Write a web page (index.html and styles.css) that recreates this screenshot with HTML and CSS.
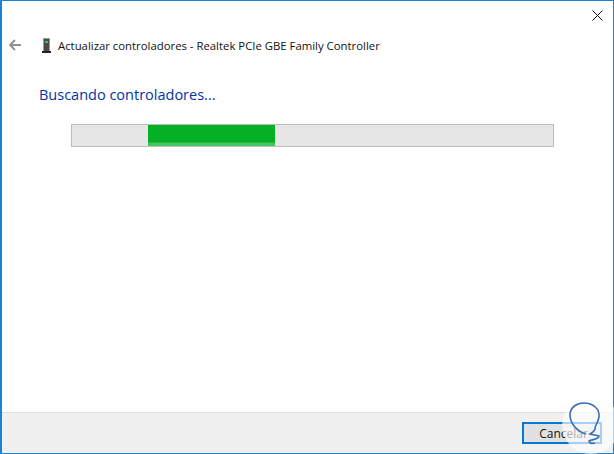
FILE: index.html
```html
<!DOCTYPE html>
<html lang="es">
<head>
    <meta charset="UTF-8">
    <title>Actualizar controladores</title>
    <link rel="stylesheet" href="styles.css">
</head>
<body>
    <div class="window">
        <div class="title-bar">
            <svg class="close-icon" width="11" height="11" viewBox="0 0 11 11">
                <path d="M0.5 0.5L10.5 10.5M10.5 0.5L0.5 10.5" stroke="#111" stroke-width="1" fill="none"/>
            </svg>
        </div>
        <div class="nav-row">
            <svg class="back-icon" width="12" height="12" viewBox="0 0 12 12">
                <path d="M6 1L1 6L6 11M1 6H12" stroke="#909090" stroke-width="1.8" fill="none"/>
            </svg>
            <svg class="device-icon" width="9" height="15" viewBox="0 0 9 15">
                <rect x="1" y="0" width="7" height="13" fill="#9a9a9a"/>
                <rect x="2" y="1" width="5" height="12" fill="#4a4a4a"/>
                <rect x="3" y="3" width="3" height="2" fill="#19e03c"/>
                <rect x="0" y="13" width="9" height="2" fill="#222"/>
            </svg>
            <span class="nav-title">Actualizar controladores - Realtek PCIe GBE Family Controller</span>
        </div>
        <div class="content">
            <h1 class="heading">Buscando controladores...</h1>
            <div class="progress">
                <div class="progress-fill"></div>
            </div>
        </div>
        <div class="footer">
            <button class="cancel-btn">Cancelar</button>
        </div>
    </div>
    <div class="watermark">
        <svg width="58" height="58" viewBox="0 0 58 58">
            <path d="M24 38C16 36 8 28 8 19C8 11 15 7 22 7C31 7 38 13 37 21C36 27 33 29 33 33C32 36 30 37 28 38C31 39 34 39 37 40C36 44 30 43 27 45C27 47 30 48 33 47" stroke="#3a6fb5" stroke-width="1.6" fill="none"/>
        </svg>
    </div>
</body>
</html>
```

FILE: styles.css
```css
html, body {
    margin: 0;
    padding: 0;
}

body {
    width: 614px;
    height: 454px;
    overflow: hidden;
    position: relative;
    font-family: "Open Sans", "Noto Sans", sans-serif;
}

.window {
    box-sizing: border-box;
    width: 614px;
    height: 454px;
    border: 1px solid #1883d7;
    border-left-width: 2px;
    background: #fff;
    display: flex;
    flex-direction: column;
}

.title-bar {
    height: 30px;
    display: flex;
    justify-content: flex-end;
    align-items: flex-start;
    padding: 9px 10px 0 0;
    box-sizing: border-box;
}

.nav-row {
    display: flex;
    align-items: center;
    height: 28px;
}

.back-icon {
    margin-left: 7px;
}

.device-icon {
    margin-left: 21px;
}

.nav-title {
    margin-left: 7px;
    font-size: 11.35px;
    color: #111;
    white-space: nowrap;
}

.content {
    flex: 1;
    padding: 0 0 0 37px;
}

.heading {
    margin: 26px 0 0;
    font-size: 14.5px;
    font-weight: 400;
    line-height: 20px;
    color: #0033a8;
}

.progress {
    box-sizing: border-box;
    width: 483px;
    height: 23px;
    margin: 19px 0 0 32px;
    border: 1px solid #bcbcbc;
    background: #e6e6e6;
    overflow: hidden;
}

.progress-fill {
    width: 127px;
    height: 21px;
    margin-left: 76px;
    background: linear-gradient(#06b025 0, #06b025 17px, #3fc35a 18px, #4cc866 21px);
}

.footer {
    height: 41px;
    box-sizing: border-box;
    border-top: 1px solid #dfdfdf;
    background: #f0f0f0;
    display: flex;
    justify-content: flex-end;
    align-items: flex-start;
    padding: 9px 11px 0 0;
}

.cancel-btn {
    box-sizing: border-box;
    width: 80px;
    height: 22px;
    padding: 0 0 0 3px;
    border: 2px solid #0078d7;
    background: #e1e1e1;
    font-family: inherit;
    font-size: 12px;
    color: #111;
}

.watermark {
    position: absolute;
    left: 562px;
    top: 396px;
    width: 58px;
    height: 58px;
    border-radius: 50%;
    background: rgba(255, 255, 255, 0.65);
}
```
